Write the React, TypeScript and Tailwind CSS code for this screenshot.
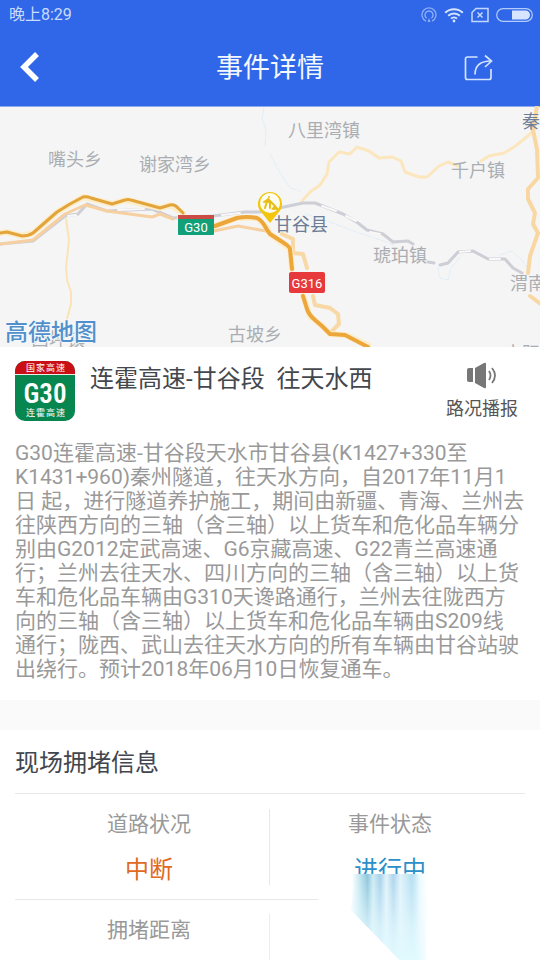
import React from 'react';

const description = [
  'G30连霍高速-甘谷段天水市甘谷县(K1427+330至',
  'K1431+960)秦州隧道，往天水方向，自2017年11月1',
  '日 起，进行隧道养护施工，期间由新疆、青海、兰州去',
  '往陕西方向的三轴（含三轴）以上货车和危化品车辆分',
  '别由G2012定武高速、G6京藏高速、G22青兰高速通',
  '行；兰州去往天水、四川方向的三轴（含三轴）以上货',
  '车和危化品车辆由G310天谗路通行，兰州去往陇西方',
  '向的三轴（含三轴）以上货车和危化品车辆由S209线',
  '通行；陇西、武山去往天水方向的所有车辆由甘谷站驶',
  '出绕行。预计2018年06月10日恢复通车。',
];

const places = [
  { name: '嘴头乡', x: 48, y: 60 },
  { name: '谢家湾乡', x: 139, y: 65 },
  { name: '八里湾镇', x: 288, y: 31 },
  { name: '千户镇', x: 451, y: 71 },
  { name: '琥珀镇', x: 373, y: 156 },
  { name: '渭南镇', x: 510, y: 184 },
  { name: '古坡乡', x: 228, y: 235 },
  { name: '西坪镇', x: 31, y: 240 },
  { name: '大阳镇', x: 504, y: 254 },
];

function StatusBar() {
  return (
    <div className="flex h-[30px] items-center justify-between pl-[9px] pr-[7px] text-[16px] text-[#c9dcff]">
      <span>晚上8:29</span>
      <div className="flex items-center gap-[7px]">
        <svg className="h-4 w-4" viewBox="0 0 16 16" fill="none" stroke="#8fb0f6" strokeWidth="1.3">
          <path d="M5 14.2a7 7 0 1 1 6 0" />
          <path d="M5.6 11.2a4 4 0 1 1 4.8 0" />
          <path d="M6.5 15 8 11 9.5 15z" fill="#8fb0f6" stroke="none" />
        </svg>
        <svg className="h-4 w-5" viewBox="0 0 20 16" fill="none" stroke="#d5e4ff" strokeWidth="2">
          <path d="M1.2 5.8a12.5 12.5 0 0 1 17.6 0" />
          <path d="M4.2 8.8a8.3 8.3 0 0 1 11.6 0" />
          <path d="M7 11.6a4.3 4.3 0 0 1 6 0" />
          <circle cx="10" cy="14" r="1.4" fill="#d5e4ff" stroke="none" />
        </svg>
        <svg className="h-4 w-[18px]" viewBox="0 0 18 16" fill="none" stroke="#c4d8ff" strokeWidth="1.5">
          <path d="M5 1.5h12v13H1v-9z" />
          <path d="m6.5 5.500 5 5m0-5-5 5" />
        </svg>
        <svg className="h-4 w-[37px]" viewBox="0 0 37 16">
          <rect x="0.7" y="1.7" width="35.6" height="12.6" rx="6.3" fill="none" stroke="#b4cbfc" strokeWidth="1.2" />
          <path d="M16 3.5h13.5a4.5 4.5 0 0 1 0 9H16z" fill="#d7e4ff" />
        </svg>
      </div>
    </div>
  );
}

function Header() {
  return (
    <header className="bg-[#3067e8]">
      <StatusBar />
      <div className="grid h-[76px] grid-cols-[1fr_auto_1fr] items-center pl-4 pr-[45px]">
        <button type="button" aria-label="返回" className="justify-self-start">
          <svg className="h-8 w-7" viewBox="0 0 28 32" fill="none" stroke="#fff" strokeWidth="5.5">
            <path d="M21 2 8 15l13 13" />
          </svg>
        </button>
        <h1 className="pl-[29px] text-[27px] leading-8 text-[#f3f8ff]">事件详情</h1>
        <button type="button" aria-label="分享" className="justify-self-end">
          <svg className="h-8 w-8" viewBox="0 0 32 32" fill="none" stroke="#d3e3ff" strokeWidth="1.7">
            <path d="M14.500 5H4.500a2 2 0 0 0-2 2v18.500a2 2 0 0 0 2 2H26a2 2 0 0 0 2-2V17" />
            <path d="M12 22.500c0-8 4-13.500 16-13.500" />
            <path d="M22 3.500 28.500 9 22 15" />
          </svg>
        </button>
      </div>
    </header>
  );
}

function RoadMap() {
  return (
    <svg className="block w-full bg-[#f5f5f5]" viewBox="0 0 540 241" role="img" aria-label="高德地图" fill="none" strokeLinejoin="round" strokeLinecap="round">
      <path d="M0 .5h540" stroke="#8da9ee" />

      {/* rivers */}
      <path d="M264 2l-2 10 4 12-1 16M270 48l12 22 8 12 10 3M306 108l24 8 26 10 24 8 14 5M438 161l2 11 8 2 3-12 10-12M500 149l12-4 10 9 8 12M540 4v3" stroke="#e0eef5" strokeDasharray="6 2" />

      {/* minor roads */}
      <path d="M66 113l3 21-3 28 1 12 4 12v12l-4 15" stroke="#fbe3b6" strokeWidth="2" />
      <path d="M302 95l8-9 10-7 7-11 2-12 10-10 11 2 7-7 12 4 10 7 13-1 9 4 4 11 14 5 8 0 12-11 9-4 10 4M481 55l8-5 15-3 10-6 9-7 7-6 4-4" stroke="#fbe6bd" strokeWidth="3" />
      <path d="M537 0l-4 24 4 19 1 29-10 11v10l7 14-2 11 5 9-8 23-2 17M530 190l12 9" stroke="#f9d7a2" strokeWidth="4" />
      <path d="M282 128l11 5v14l10 1 4 14M313 190l2 9 15 3 8 6 1 10-7 7" stroke="#f8d8a4" strokeWidth="4" />

      {/* railway */}
      <path d="M0 138l33-3 32-25 13-2 9-10 20 7 45-2 21 9 40-2 32-4h15l43-9 12 0 28 11 15 9 9 7 16 4 10 8 15-1 5 3M428 156l6 1M440 159l8-2 10-11 15-1 15 8 17 0 8 9 9 5" stroke="#cdced6" strokeWidth="3" />
      <path d="M68 110l8-1M118 104l26-1M178 112l24-1M222 109l18-2M322 100l14 5M346 110l10 5M370 126l10 2M460 146l10-1M490 153l10 0" stroke="#f8f8f8" strokeWidth="2" />

      {/* national road */}
      <path d="M0 138l33-4 32-26 20-9 22 6 45 6 8-3 13 5M214 125l24-5 28 5" stroke="#f6d0a0" strokeWidth="3" />

      {/* expressway */}
      <g stroke="#fdedc9" strokeWidth="6">
        <path d="M0 127l7-1 15 4 11-3 24-21 26-15 29 7 13-4 35 8 10-3 13 8M215 120l22-8h20l10 10 3 6 20 15 2 20M303 190l7 20 12 10 8 8 15 1 23 10" />
      </g>
      <path d="M0 127l7-1 15 4c4 0 8-1 11-3l24-21 13-8 13-7q4-1 8 1l21 6 13-4q3-1 6 0l29 8 10-3q5-1 8 3l5 5" stroke="#e3a53b" strokeWidth="3" />
      <path d="M215 120l22-8q10-2 20 0c7 3 8 10 13 16l14 9q6 4 6 6l2 20M303 190l4 13q2 6 8 11l7 6 8 8 15 1 23 12" stroke="#eda63a" strokeWidth="4" />

      {/* place names */}
      <g fontSize="18" fill="#aaaeb2">
        {places.map((place) => (
          <text key={place.name} x={place.x} y={place.y}>
            {place.name}
          </text>
        ))}
        <g fill="#6c7d95">
          <text x="522" y="22">秦安县</text>
          <text x="274" y="125">甘谷县</text>
        </g>
      </g>

      {/* road shields */}
      <rect x="178" y="109" width="36" height="20" rx="1" fill="#12a07a" />
      <path d="M178 109h36v4h-36z" fill="#cb4c44" />
      <rect x="289" y="166" width="36" height="21" rx="2" fill="#e7393c" />
      <g fontSize="13" fill="#fff" textAnchor="middle" className="font-['Roboto','Liberation_Sans',sans-serif]">
        <text x="196" y="126">G30</text>
        <text x="307" y="182">G316</text>
      </g>

      {/* construction pin */}
      <path d="M270 117l-8-10a12 12 0 1 1 16 0z" fill="#f3c50c" />
      <circle cx="270" cy="97" r="10" fill="#fffdf0" />
      <g stroke="#e8bd17" strokeWidth="2">
        <path d="M265 102l2-7 3 2v5M267 94l-3 2M268 93l6 6" />
        <circle cx="269" cy="91" r="1" fill="#e8bd17" stroke="none" />
        <path d="M272 103l3-4 3 4z" fill="#e8bd17" strokeWidth="1" />
      </g>

      <text x="5" y="234" fontSize="23" fontWeight="500" fill="#5290cb" stroke="#f5f9fd" strokeWidth="2" paintOrder="stroke">
        高德地图
      </text>
    </svg>
  );
}

function HighwaySign() {
  return (
    <svg className="h-[60px] w-[60px] shrink-0" viewBox="0 0 60 60" role="img" aria-label="G30 连霍高速">
      <rect width="60" height="60" rx="10" fill="#078650" />
      <path d="M0 13V10A10 10 0 0 1 10 0h40a10 10 0 0 1 10 10v3z" fill="#c90e15" />
      <path d="M0 13.500h60" stroke="#e8efe8" />
      <g fill="#fff" fontSize="9">
        <text x="11" y="10">国</text>
        <text x="21" y="10">家</text>
        <text x="31" y="10">高</text>
        <text x="41" y="10">速</text>
        <text x="30" y="42" fontSize="27" fontWeight="600" textAnchor="middle" className="font-['Roboto_Condensed','Liberation_Sans_Narrow','Roboto',sans-serif]">
          G30
        </text>
        <text x="11" y="55">连</text>
        <text x="21" y="55">霍</text>
        <text x="31" y="55">高</text>
        <text x="41" y="55">速</text>
      </g>
    </svg>
  );
}

function EventInfo() {
  return (
    <section className="bg-white px-[15px] pb-[19px]">
      <div className="flex h-[94px] items-start pt-[14px]">
        <HighwaySign />
        <h2 className="ml-[15px] flex-1 whitespace-pre text-[24px] leading-9 text-[#44484d]">连霍高速-甘谷段  往天水西</h2>
        <button type="button" className="mr-[7px] flex flex-col items-center gap-2 text-[18px] leading-6 text-[#555]">
          <svg className="h-7 w-8" viewBox="0 0 32 28" fill="#777">
            <path d="M3 7h4v14H3a2 2 0 0 1-2-2V9a2 2 0 0 1 2-2z" />
            <path d="M9 7l9-5q2-1 2 1v23q0 2-2 1l-9-5z" />
            <path d="M23 10q3 4.500 0 9M26 7q6 7.500 0 15" fill="none" stroke="#777" strokeWidth="1.8" />
          </svg>
          路况播报
        </button>
      </div>
      <p className="text-[21px] leading-6 text-[#999]">
        {description.map((line) => (
          <span key={line} className="block whitespace-nowrap">
            {line}
          </span>
        ))}
      </p>
    </section>
  );
}

function Smear() {
  return (
    <svg className="absolute left-12 top-[76px] h-[90px] w-[207px]" viewBox="0 0 207 90" aria-hidden="true">
      <defs>
        <linearGradient id="streaks" x1="34" x2="112" y1="0" y2="0" gradientUnits="userSpaceOnUse">
          <stop offset="0" stopColor="#fff" />
          <stop offset=".1" stopColor="#c3e7ef" />
          <stop offset=".2" stopColor="#8cc5db" />
          <stop offset=".27" stopColor="#d0ecf3" />
          <stop offset=".36" stopColor="#a5d0ea" />
          <stop offset=".44" stopColor="#e2f4fb" />
          <stop offset=".53" stopColor="#add3ec" />
          <stop offset=".62" stopColor="#e2f4fb" />
          <stop offset=".77" stopColor="#b4def0" />
          <stop offset=".88" stopColor="#eafafe" />
          <stop offset="1" stopColor="#fff" />
        </linearGradient>
        <linearGradient id="fade" x1="0" x2="0" y1="0" y2="1">
          <stop offset="0" stopColor="#e4f8fe" stopOpacity="0" />
          <stop offset=".6" stopColor="#e4f8fe" stopOpacity=".75" />
          <stop offset="1" stopColor="#e0fafe" />
        </linearGradient>
        <linearGradient id="edge" x1="0" x2="1" y1="0" y2="0">
          <stop offset="0" stopColor="#fff" stopOpacity="0" />
          <stop offset="1" stopColor="#fff" />
        </linearGradient>
      </defs>
      <path d="M0 4h207v86H0z" fill="#fff" />
      <path d="M34 4h78v86H82L33 40z" fill="url(#streaks)" />
      <path d="M37 4h71v86H82L33 40z" fill="url(#fade)" />
      <path d="M98 4h16v86h-16z" fill="url(#edge)" />
    </svg>
  );
}

function Congestion() {
  return (
    <section className="px-[15px]">
      <h2 className="pb-3 pt-[15px] text-[24px] leading-9 text-[#41464e]">现场拥堵信息</h2>
      <dl className="grid grid-cols-2 text-center text-[21px] text-[#999]">
        <div className="flex h-[107px] items-center border-t border-b border-[#e8e8e8]">
          <div className="flex-1 pl-[14px] pt-0.5">
            <dt className="leading-8">道路状况</dt>
            <dd className="mt-3 text-[24px] leading-9 text-[#e06a1e]">中断</dd>
          </div>
          <div className="h-[76px] w-px bg-[#e8e8e8]" />
        </div>
        <div className="relative flex h-[107px] items-center border-t border-b border-[#e8e8e8]">
          <div className="flex-1 pr-[15px] pt-0.5">
            <dt className="leading-8">事件状态</dt>
            <dd className="mt-3 text-[24px] leading-9 text-[#2b8fc9]">进行中</dd>
          </div>
          <Smear />
        </div>
        <div className="flex items-start pt-[14px]">
          <div className="flex-1 pl-[14px]">
            <dt className="leading-8">拥堵距离</dt>
          </div>
          <div className="h-[46px] w-px bg-[#ececec]" />
        </div>
      </dl>
    </section>
  );
}

export default function App() {
  return (
    <main className="min-h-screen overflow-hidden bg-white font-['Roboto','Noto_Sans_CJK_SC',sans-serif]">
      <Header />
      <RoadMap />
      <EventInfo />
      <div className="h-[30px] bg-[#fafafa]" />
      <Congestion />
    </main>
  );
}
